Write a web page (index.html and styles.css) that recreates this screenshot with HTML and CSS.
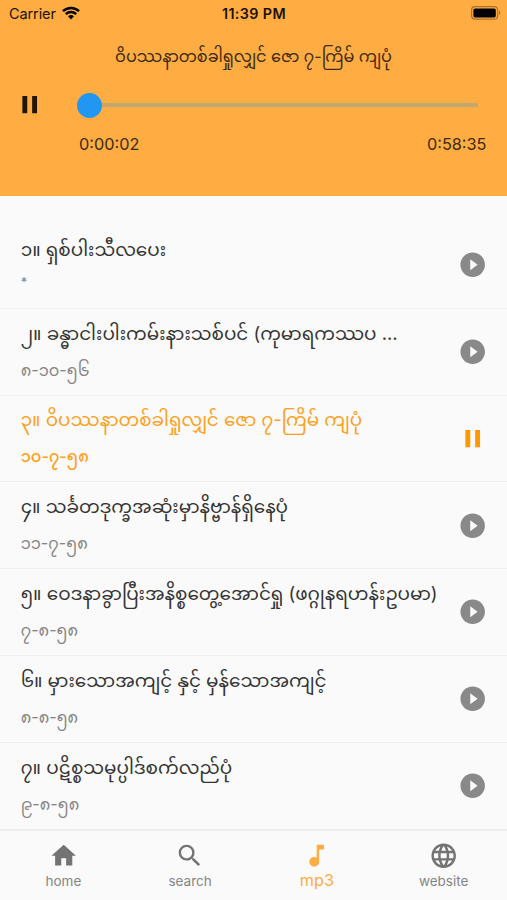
FILE: index.html
```html
<!DOCTYPE html>
<html lang="my">

<head>
    <meta charset="UTF-8">
    <meta name="viewport" content="width=device-width, initial-scale=1.0">
    <title>mp3</title>
    <link rel="stylesheet" href="styles.css">
</head>

<body>
    <!-- icons -->
    <svg class="defs">
        <symbol id="play" viewBox="0 0 24 24">
            <path d="M12 2C6.48 2 2 6.48 2 12s4.48 10 10 10 10-4.48 10-10S17.52 2 12 2zm-2 14.5v-9l6 4.5-6 4.5z" />
        </symbol>
        <symbol id="pause" viewBox="0 0 24 24">
            <path d="M6 19h4V5H6v14zm8-14v14h4V5h-4z" />
        </symbol>
    </svg>
    <div class="app">
        <div class="header">
            <div class="status">
                <div class="carrier">
                    <span>Carrier</span>
                    <svg class="wifi" viewBox="0 0 18 14">
                        <path d="M1 5.2a11.5 11.5 0 0 1 16 0" />
                        <path d="M3.8 8.2a7.4 7.4 0 0 1 10.4 0" />
                        <path class="fill" d="M9 13.4l-3-3.1a4.4 4.4 0 0 1 6 0z" />
                    </svg>
                </div>
                <div class="clock">11:39 PM</div>
                <svg class="battery" viewBox="0 0 30 14">
                    <rect class="case" x=".6" y=".6" width="26" height="12.6" rx="3.4" />
                    <rect x="2.4" y="2.4" width="22.4" height="9" rx="1.6" />
                    <path class="cap" d="M28 4.6c1.6.7 1.6 4 0 4.7z" />
                </svg>
            </div>
            <div class="now">ဝိပဿနာတစ်ခါရှုလျှင် ဇော ၇-ကြိမ် ကျပုံ</div>
            <div class="player">
                <svg class="icon"><use href="#pause" /></svg>
                <div class="progress">
                    <i class="point"></i>
                    <div class="bar"></div>
                </div>
            </div>
            <div class="time">
                <span>0:00:02</span>
                <span>0:58:35</span>
            </div>
        </div>
        <ul class="list">
            <li class="no-date">
                <div class="info">
                    <div class="title">၁။ ရှစ်ပါးသီလပေး</div>
                    <div class="date">*</div>
                </div>
                <svg class="icon"><use href="#play" /></svg>
            </li>
            <li>
                <div class="info">
                    <div class="title">၂။ ခန္ဓာငါးပါးကမ်းနားသစ်ပင် (ကုမာရကဿပ ...</div>
                    <div class="date">၈-၁၀-၅၆</div>
                </div>
                <svg class="icon"><use href="#play" /></svg>
            </li>
            <li class="active">
                <div class="info">
                    <div class="title">၃။ ဝိပဿနာတစ်ခါရှုလျှင် ဇော ၇-ကြိမ် ကျပုံ</div>
                    <div class="date">၁၀-၇-၅၈</div>
                </div>
                <svg class="icon"><use href="#pause" /></svg>
            </li>
            <li>
                <div class="info">
                    <div class="title">၄။ သင်္ခတဒုက္ခအဆုံးမှာနိဗ္ဗာန်ရှိနေပုံ</div>
                    <div class="date">၁၁-၇-၅၈</div>
                </div>
                <svg class="icon"><use href="#play" /></svg>
            </li>
            <li>
                <div class="info">
                    <div class="title">၅။ ဝေဒနာခွာပြီးအနိစ္စတွေ့အောင်ရှု (ဖဂ္ဂုနရဟန်းဥပမာ)</div>
                    <div class="date">၇-၈-၅၈</div>
                </div>
                <svg class="icon"><use href="#play" /></svg>
            </li>
            <li>
                <div class="info">
                    <div class="title">၆။ မှားသောအကျင့် နှင့် မှန်သောအကျင့်</div>
                    <div class="date">၈-၈-၅၈</div>
                </div>
                <svg class="icon"><use href="#play" /></svg>
            </li>
            <li>
                <div class="info">
                    <div class="title">၇။ ပဋိစ္စသမုပ္ပါဒ်စက်လည်ပုံ</div>
                    <div class="date">၉-၈-၅၈</div>
                </div>
                <svg class="icon"><use href="#play" /></svg>
            </li>
        </ul>
        <div class="tabs">
            <div class="tab">
                <svg class="icon" viewBox="0 0 24 24"><path d="M10 20v-6h4v6h5v-8h3L12 3 2 12h3v8z" /></svg>
                <span>home</span>
            </div>
            <div class="tab">
                <svg class="icon" viewBox="0 0 24 24"><path d="M15.5 14h-.79l-.28-.27A6.471 6.471 0 0 0 16 9.5 6.5 6.5 0 1 0 9.5 16c1.61 0 3.09-.59 4.23-1.57l.27.28v.79l5 4.99L20.49 19l-4.99-5zm-6 0C7.01 14 5 11.99 5 9.5S7.01 5 9.5 5 14 7.01 14 9.5 11.99 14 9.5 14z" /></svg>
                <span>search</span>
            </div>
            <div class="tab current">
                <svg class="icon" viewBox="0 0 24 24"><path d="M12 3v10.55c-.59-.34-1.27-.55-2-.55-2.21 0-4 1.79-4 4s1.79 4 4 4 4-1.79 4-4V7h4V3h-6z" /></svg>
                <span>mp3</span>
            </div>
            <div class="tab">
                <svg class="icon" viewBox="0 0 24 24"><path d="M11.99 2C6.47 2 2 6.48 2 12s4.47 10 9.99 10C17.52 22 22 17.52 22 12S17.52 2 11.99 2zm6.93 6h-2.95c-.32-1.25-.78-2.45-1.38-3.56 1.84.63 3.37 1.91 4.33 3.56zM12 4.04c.83 1.2 1.48 2.53 1.91 3.96h-3.82c.43-1.43 1.08-2.76 1.91-3.96zM4.26 14C4.1 13.36 4 12.69 4 12s.1-1.36.26-2h3.38c-.08.66-.14 1.32-.14 2s.06 1.34.14 2H4.26zm.82 2h2.95c.32 1.25.78 2.45 1.38 3.56-1.84-.63-3.37-1.9-4.33-3.56zm2.95-8H5.08c.96-1.66 2.49-2.93 4.33-3.56C8.81 5.55 8.35 6.75 8.03 8zM12 19.96c-.83-1.2-1.48-2.53-1.91-3.96h3.82c-.43 1.43-1.08 2.76-1.91 3.96zM14.34 14H9.66c-.09-.66-.16-1.32-.16-2s.07-1.35.16-2h4.68c.09.65.16 1.32.16 2s-.07 1.34-.16 2zm.25 5.56c.6-1.11 1.06-2.31 1.38-3.56h2.95c-.96 1.65-2.49 2.93-4.33 3.56zM16.36 14c.08-.66.14-1.32.14-2s-.06-1.34-.14-2h3.38c.16.64.26 1.31.26 2s-.1 1.36-.26 2h-3.38z" /></svg>
                <span>website</span>
            </div>
        </div>
    </div>
</body>

</html>
```
FILE: styles.css
```css
* {
    margin: 0;
    padding: 0;
    box-sizing: border-box;
    list-style: none;
}

body {
    font-family: Inter, "Noto Sans", "Noto Sans Myanmar", sans-serif;
    background-color: #fafafa;
}

.defs {
    display: none;
}

.app {
    display: flex;
    flex-direction: column;
    width: 507px;
    height: 900px;
    overflow: hidden;
}

.icon {
    flex: none;
    width: 29.4px;
    height: 29.4px;
    fill: #898989;
}

.header {
    flex: none;
    height: 196px;
    background-color: #ffad42;
    color: #3d2a10;
}

/* 状态栏 */
.status {
    display: grid;
    grid-template-columns: 1fr auto 1fr;
    align-items: center;
    height: 27px;
    padding: 0 6px 0 9px;
    color: #1a1207;
    font-size: 14.5px;
}

.carrier {
    display: flex;
    align-items: center;
    gap: 6px;
}

.carrier span {
    letter-spacing: -.1px;
}

.wifi {
    width: 18px;
    height: 14px;
    margin-top: -2px;
    fill: none;
    stroke: #000;
    stroke-width: 2.4;
}

.wifi .fill {
    fill: #000;
    stroke: none;
}

.clock {
    margin-right: 2px;
    font-size: 14.3px;
    font-weight: 600;
    letter-spacing: .4px;
}

.battery {
    justify-self: end;
    width: 30px;
    height: 14px;
    margin-top: -1px;
}

.battery .case {
    fill: none;
    stroke: #a87330;
    stroke-width: 1.2;
}

.battery .cap {
    fill: #a87330;
}

.now {
    height: 58px;
    line-height: 58px;
    text-align: center;
    font-size: 16.1px;
    white-space: nowrap;
}

.player {
    display: flex;
    align-items: center;
    height: 40px;
    padding: 0 29px 0 15px;
}

.player .icon {
    fill: #1f1508;
}

.progress {
    display: flex;
    flex: 1;
    align-items: center;
    margin-left: 32.5px;
}

.point {
    width: 25px;
    height: 25px;
    border-radius: 50%;
    background: #2196f3;
}

.bar {
    flex: 1;
    height: 4px;
    background-color: #c4a66f;
}

.time {
    display: flex;
    justify-content: space-between;
    padding: 9px 20.5px 0 79px;
    font-size: 16.3px;
    line-height: 21px;
}

/* 列表 */
.list {
    flex: 1;
    min-height: 0;
    overflow: hidden;
    padding-top: 26px;
}

.list li {
    display: flex;
    align-items: center;
    justify-content: space-between;
    height: 86.8px;
    padding: 0 20px 0 20.7px;
    border-bottom: 1px solid #f0f0f0;
}

.title {
    height: 37px;
    line-height: 37px;
    font-size: 18.4px;
    color: #333;
    white-space: nowrap;
}

.date {
    height: 37px;
    line-height: 37px;
    font-size: 16.2px;
    color: #858585;
}

.no-date .title {
    height: 35px;
}

.no-date .date {
    height: 33px;
    line-height: 32px;
    font-size: 13px;
}

.active .title,
.active .date {
    color: #ff9f1a;
}

.active .date {
    font-weight: 500;
}

.active .icon {
    fill: #ff9800;
}

/* 底部菜单 */
.tabs {
    display: flex;
    flex: none;
    height: 71px;
    border-top: 2px solid #ededed;
}

.tab {
    display: flex;
    flex: 1;
    flex-direction: column;
    align-items: center;
    padding-top: 10px;
    font-size: 13.5px;
    line-height: 23px;
    color: #858585;
}

.tab .icon {
    fill: #737373;
}

.current {
    font-size: 16.2px;
    line-height: 21px;
    color: #ffad42;
}

.current .icon {
    fill: #ffad42;
}
```
